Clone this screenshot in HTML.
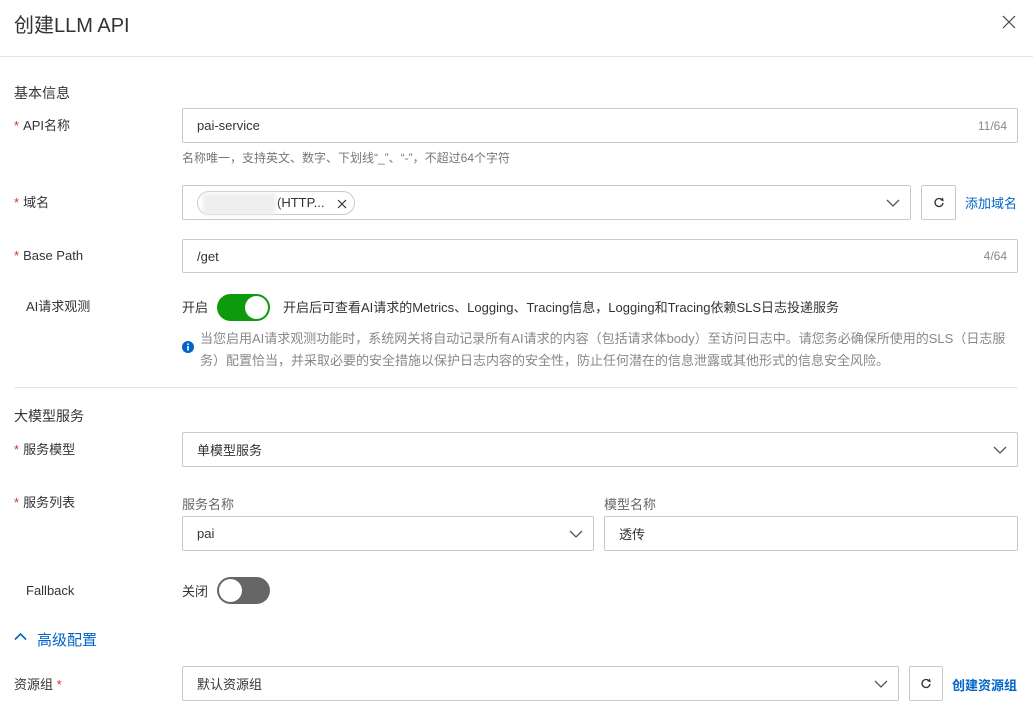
<!DOCTYPE html>
<html><head><meta charset="utf-8"><style>
*{box-sizing:border-box;margin:0;padding:0}
body{width:1033px;height:706px;overflow:hidden;background:#fff;font-family:"Liberation Sans","Noto Sans CJK SC",sans-serif;color:#333;font-size:13px;position:relative}
.a{position:absolute;white-space:nowrap}
.lbl{position:absolute;left:14px;font-size:13px;color:#333;line-height:16px}
.lbl .s{color:#d93026;margin-right:4px}
.in{position:absolute;border:1px solid #c9c9c9;border-radius:2px;background:#fff;font-size:13px;color:#333;padding-left:14px;display:flex;align-items:center}
.cnt{position:absolute;right:10px;color:#888;font-size:12px}
.chev{position:absolute;right:10px;top:50%;margin-top:-7px}
.btn{position:absolute;border:1px solid #c9c9c9;border-radius:2px;display:flex;align-items:center;justify-content:center}
.link{position:absolute;color:#0064c8;font-size:13px}
.hr{position:absolute;left:14px;right:15px;height:1px;background:#e5e5e5}
.h{position:absolute;left:14px;font-size:14px;color:#333}
</style></head><body>
<div class="a" style="left:14px;top:9px;font-size:20px;color:#333">创建LLM API</div>
<svg class="a" style="left:1002px;top:15px" width="14" height="14" viewBox="0 0 14 14"><path d="M1 1L13 13M13 1L1 13" stroke="#444" stroke-width="1.2"/></svg>
<div class="a" style="left:0;right:0;top:56px;height:1px;background:#e5e5e5"></div>

<div class="h" style="top:83px">基本信息</div>
<div class="lbl" style="top:118px"><span class="s">*</span>API名称</div>
<div class="in" style="left:182px;top:108px;width:836px;height:35px">pai-service<span class="cnt">11/64</span></div>
<div class="a" style="left:182px;top:149px;font-size:12px;color:#777">名称唯一，支持英文、数字、下划线“_”、“-”，不超过64个字符</div>

<div class="lbl" style="top:195px"><span class="s">*</span>域名</div>
<div class="in" style="left:182px;top:185px;width:729px;height:35px;padding-left:14px">
<div style="border:1px solid #ccc;border-radius:12px;height:24px;width:158px;position:relative;font-size:13px;display:flex;align-items:center">
<div style="position:absolute;left:5px;top:1px;width:73px;height:22px;background:#eee;filter:blur(2px)"></div>
<span style="margin-left:79px">(HTTP...</span>
<svg style="position:absolute;left:139px;top:7px" width="10" height="10" viewBox="0 0 10 10"><path d="M1 1L9 9M9 1L1 9" stroke="#333" stroke-width="1.2"/></svg></div>
<svg class="chev" width="14" height="14" viewBox="0 0 14 14"><path d="M1 4L7 10L13 4" fill="none" stroke="#555" stroke-width="1.3"/></svg></div>
<div class="btn" style="left:921px;top:185px;width:35px;height:35px"><svg width="12" height="12" viewBox="0 0 12 12"><path d="M9.5 3.5A4 4 0 1 0 10 6" fill="none" stroke="#333" stroke-width="1.3"/><path d="M7.5 2.5L10 3.5L9.5 0.8" fill="none" stroke="#333" stroke-width="1.1"/></svg></div>
<div class="link" style="left:965px;top:193px">添加域名</div>

<div class="lbl" style="top:248px"><span class="s">*</span>Base Path</div>
<div class="in" style="left:182px;top:239px;width:836px;height:34px">/get<span class="cnt">4/64</span></div>

<div class="lbl" style="top:299px;left:26px">AI请求观测</div>
<div class="a" style="left:182px;top:297px">开启</div>
<div class="a" style="left:217px;top:294px;width:53px;height:27px;border-radius:14px;background:#0d9a0d"><div style="position:absolute;right:2px;top:2px;width:23px;height:23px;border-radius:50%;background:#fff"></div></div>
<div class="a" style="left:283px;top:297px">开启后可查看AI请求的Metrics、Logging、Tracing信息，Logging和Tracing依赖SLS日志投递服务</div>
<svg class="a" style="left:182px;top:341px" width="12" height="12" viewBox="0 0 12 12"><circle cx="6" cy="6" r="6" fill="#0064c8"/><rect x="5.2" y="5" width="1.6" height="4.5" fill="#fff"/><circle cx="6" cy="3.2" r="0.9" fill="#fff"/></svg>
<div class="a" style="left:200px;top:328px;color:#888;line-height:22px;font-size:13px">当您启用AI请求观测功能时，系统网关将自动记录所有AI请求的内容（包括请求体body）至访问日志中。请您务必确保所使用的SLS（日志服<br>务）配置恰当，并采取必要的安全措施以保护日志内容的安全性，防止任何潜在的信息泄露或其他形式的信息安全风险。</div>

<div class="hr" style="top:387px"></div>
<div class="h" style="top:406px">大模型服务</div>
<div class="lbl" style="top:442px"><span class="s">*</span>服务模型</div>
<div class="in" style="left:182px;top:432px;width:836px;height:35px">单模型服务<svg class="chev" width="14" height="14" viewBox="0 0 14 14"><path d="M1 4L7 10L13 4" fill="none" stroke="#555" stroke-width="1.3"/></svg></div>

<div class="lbl" style="top:495px"><span class="s">*</span>服务列表</div>
<div class="a" style="left:182px;top:494px;color:#666">服务名称</div>
<div class="a" style="left:604px;top:494px;color:#666">模型名称</div>
<div class="in" style="left:182px;top:516px;width:412px;height:35px">pai<svg class="chev" width="14" height="14" viewBox="0 0 14 14"><path d="M1 4L7 10L13 4" fill="none" stroke="#555" stroke-width="1.3"/></svg></div>
<div class="in" style="left:604px;top:516px;width:414px;height:35px">透传</div>

<div class="lbl" style="top:583px;left:26px">Fallback</div>
<div class="a" style="left:182px;top:581px">关闭</div>
<div class="a" style="left:217px;top:577px;width:53px;height:27px;border-radius:14px;background:#666"><div style="position:absolute;left:2px;top:2px;width:23px;height:23px;border-radius:50%;background:#fff"></div></div>

<svg class="a" style="left:14px;top:632px" width="13" height="9" viewBox="0 0 13 9"><path d="M1 7.5L6.5 2L12 7.5" fill="none" stroke="#0064c8" stroke-width="1.6"/></svg>
<div class="a" style="left:37px;top:629px;font-size:15px;color:#0064c8">高级配置</div>

<div class="lbl" style="top:677px">资源组 <span class="s" style="margin:0">*</span></div>
<div class="in" style="left:182px;top:666px;width:717px;height:35px">默认资源组<svg class="chev" width="14" height="14" viewBox="0 0 14 14"><path d="M1 4L7 10L13 4" fill="none" stroke="#555" stroke-width="1.3"/></svg></div>
<div class="btn" style="left:909px;top:666px;width:34px;height:35px"><svg width="12" height="12" viewBox="0 0 12 12"><path d="M9.5 3.5A4 4 0 1 0 10 6" fill="none" stroke="#333" stroke-width="1.3"/><path d="M7.5 2.5L10 3.5L9.5 0.8" fill="none" stroke="#333" stroke-width="1.1"/></svg></div>
<div class="link" style="left:952px;top:675px;font-weight:bold">创建资源组</div>
</body></html>
